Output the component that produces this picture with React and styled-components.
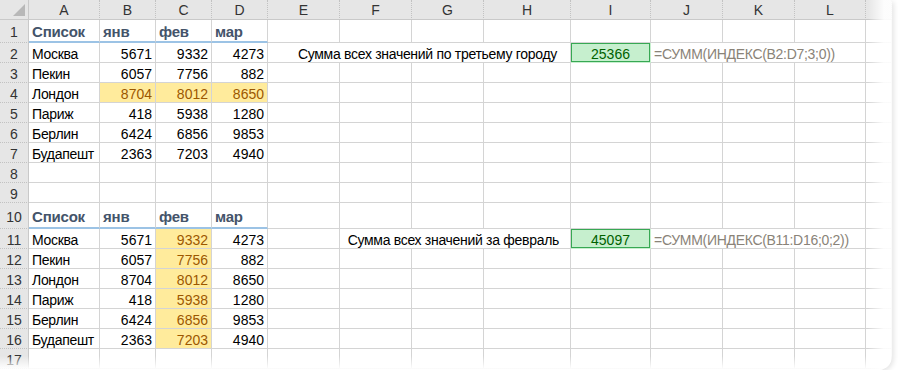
import React from 'react';
import styled, { createGlobalStyle, css } from 'styled-components';

const Global = createGlobalStyle`
  html, body { margin: 0; padding: 0; background: #ffffff; }
  body { font-family: "Liberation Sans", Arial, sans-serif; }
`;

const COLS = ['A', 'B', 'C', 'D', 'E', 'F', 'G', 'H', 'I', 'J', 'K', 'L', ''];
const WIDTHS = [29, 71, 56, 56, 56, 72, 72, 72, 87, 80, 72, 72, 71, 26];
const ROW_H = [23, 20, 20, 20, 20, 20, 20, 20, 20, 26, 20, 20, 20, 20, 20, 20, 20];

const Sheet = styled.div`
  position: relative;
  width: 892px;
  height: 370px;
  display: grid;
  grid-template-columns: ${WIDTHS.map((w) => w + 'px').join(' ')};
  grid-template-rows: 20px ${ROW_H.map((h) => h + 'px').join(' ')} 1fr;
  overflow: hidden;
  background: #ffffff;
  border-bottom-right-radius: 14px;
  box-shadow: 2px 2px 5px rgba(0, 0, 0, 0.10);
  &::after {
    content: '';
    position: absolute;
    inset: 0;
    pointer-events: none;
    background:
      linear-gradient(to right, rgba(255,255,255,0) 868px, rgba(255,255,255,0.9) 884px),
      linear-gradient(to bottom, rgba(255,255,255,0) 356px, rgba(255,255,255,0.9) 368px);
  }
`;

const Corner = styled.div`
  position: relative;
  background: #e6e6e6;
  border-right: 1px solid #c9c9c9;
  border-bottom: 1px solid #c9c9c9;
  &::before {
    content: '';
    position: absolute;
    right: 3px;
    bottom: 3px;
    width: 0;
    height: 0;
    border-left: 12px solid transparent;
    border-bottom: 12px solid #b8b8b8;
  }
`;

const ColHead = styled.div`
  background: #e6e6e6;
  border-right: 1px dotted #c2c2c2;
  border-bottom: 1px solid #c9c9c9;
  color: #333333;
  font-size: 14px;
  display: flex;
  align-items: center;
  justify-content: center;
  padding-top: 1px;
`;

const RowHead = styled.div`
  background: #e6e6e6;
  border-right: 1px solid #c9c9c9;
  border-bottom: 1px dotted #c2c2c2;
  color: #333333;
  font-size: 14px;
  display: flex;
  align-items: center;
  justify-content: center;
  padding-top: 2px;
`;

const tones = {
  plain: css`color: #000000;`,
  heading: css`
    color: #44546a;
    font-weight: bold;
    font-size: 15px;
    letter-spacing: -0.2px;
    border-bottom: 2px solid #9cc3e5;
  `,
  neutral: css`
    color: #9c5700;
    background: #ffeb9c;
  `,
  good: css`
    color: #006100;
    background: #c6efce;
    box-shadow: inset 0 0 0 1px #37a853;
    border-color: transparent;
  `,
  formula: css`color: #8a8378;`,
};

const Cell = styled.div`
  grid-column: ${(p) => (p.$span ? `${p.$col} / span ${p.$span}` : 'auto')};
  border-right: 1px solid #d4d4d4;
  border-bottom: 1px solid #d4d4d4;
  font-size: 14px;
  white-space: nowrap;
  display: flex;
  align-items: center;
  padding: 2px ${(p) => p.$padR ?? 3}px 0 3px;
  letter-spacing: ${(p) => (p.$tight ? '-0.3px' : '0')};
  justify-content: ${(p) =>
    p.$align === 'right' ? 'flex-end' : p.$align === 'center' ? 'center' : 'flex-start'};
  ${(p) => tones[p.$tone || 'plain']}
`;

const cities = [
  ['Москва', 5671, 9332, 4273],
  ['Пекин', 6057, 7756, 882],
  ['Лондон', 8704, 8012, 8650],
  ['Париж', 418, 5938, 1280],
  ['Берлин', 6424, 6856, 9853],
  ['Будапешт', 2363, 7203, 4940],
];
const heads = ['Список', 'янв', 'фев', 'мар'];

export default function App() {
  const rows = [];
  rows.push(<Corner key="corner" />);
  COLS.forEach((c, i) => rows.push(<ColHead key={`c${i}`}>{c}</ColHead>));

  const blanks = (r, from, to) => {
    const arr = [];
    for (let i = from; i <= to; i++) arr.push(<Cell key={`b${r}-${i}`} />);
    return arr;
  };

  for (let r = 1; r <= 17; r++) {
    rows.push(<RowHead key={`r${r}`}>{r}</RowHead>);
    const inTop = r >= 1 && r <= 7;
    const inBottom = r >= 10 && r <= 16;
    if (inTop || inBottom) {
      const base = inTop ? 1 : 10;
      const idx = r - base;
      if (idx === 0) {
        heads.forEach((h, i) => rows.push(<Cell key={`hd${r}${i}`} $tone="heading">{h}</Cell>));
      } else {
        const [name, ...nums] = cities[idx - 1];
        rows.push(<Cell key={`n${r}`} $tight>{name}</Cell>);
        nums.forEach((n, i) => {
          const hl = inTop ? idx === 3 : i === 1;
          rows.push(
            <Cell key={`v${r}${i}`} $align="right" $tone={hl ? 'neutral' : 'plain'}>
              {n}
            </Cell>
          );
        });
      }
    } else {
      rows.push(...blanks(r, 1, 4));
    }

    if (r === 2) {
      rows.push(
        <Cell key="t2" $col={6} $span={4} $align="right" $padR={13} $tight>
          Сумма всех значений по третьему городу
        </Cell>
      );
      rows.push(<Cell key="g2" $align="center" $tone="good">25366</Cell>);
      rows.push(
        <Cell key="f2" $col={11} $span={3} $tone="formula" $tight>
          =СУММ(ИНДЕКС(B2:D7;3;0))
        </Cell>
      );
      rows.push(<Cell key="m2" />);
    } else if (r === 11) {
      rows.push(<Cell key="e11" />);
      rows.push(
        <Cell key="t11" $col={7} $span={3} $align="right" $padR={11} $tight>
          Сумма всех значений за февраль
        </Cell>
      );
      rows.push(<Cell key="g11" $align="center" $tone="good">45097</Cell>);
      rows.push(
        <Cell key="f11" $col={11} $span={3} $tone="formula" $tight>
          =СУММ(ИНДЕКС(B11:D16;0;2))
        </Cell>
      );
      rows.push(<Cell key="m11" />);
    } else {
      rows.push(...blanks(r, 5, 13));
    }
  }

  return (
    <>
      <Global />
      <Sheet>{rows}</Sheet>
    </>
  );
}
